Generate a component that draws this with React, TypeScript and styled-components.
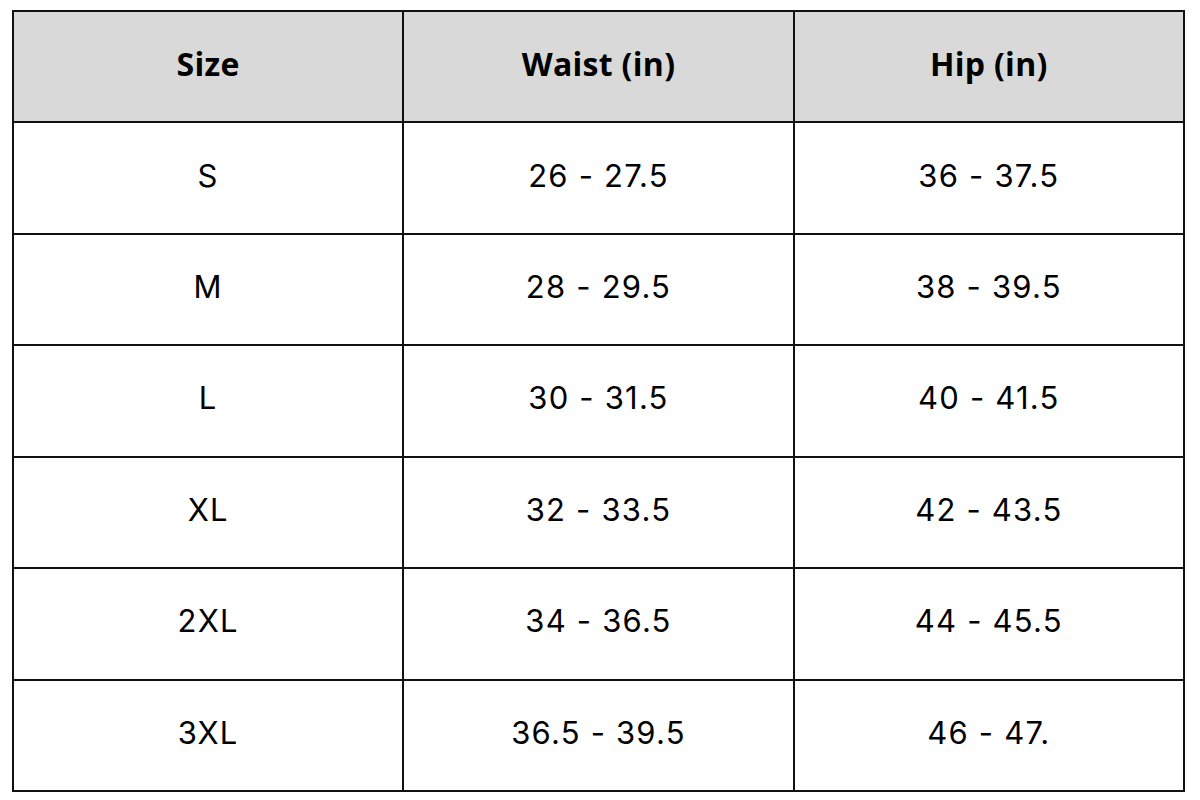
import React from "react";
import styled, { createGlobalStyle } from "styled-components";

const Global = createGlobalStyle`
  html, body { margin: 0; padding: 0; background: #ffffff; }
  body { font-family: Inter, "Open Sans", "Liberation Sans", sans-serif; }
`;

const Grid = styled.div`
  margin: 10px 0 0 12px;
  width: 1173px;
  height: 782px;
  box-sizing: border-box;
  padding: 2px;
  background: #111111;
  display: grid;
  grid-template-columns: repeat(3, 1fr);
  grid-template-rows: repeat(7, 1fr);
  gap: 2px;
`;

const Cell = styled.div<{ $head?: boolean }>`
  display: flex;
  align-items: center;
  justify-content: center;
  padding-bottom: 6px;
  box-sizing: border-box;
  background: ${(p) => (p.$head ? "#d9d9d9" : "#ffffff")};
  color: #000000;
  font-family: ${(p) =>
    p.$head
      ? `"Open Sans", Inter, "Liberation Sans", sans-serif`
      : `Inter, "Open Sans", "Liberation Sans", sans-serif`};
  font-size: ${(p) => (p.$head ? "32px" : "31px")};
  font-weight: ${(p) => (p.$head ? 700 : 400)};
  letter-spacing: ${(p) => (p.$head ? "0.3px" : "1.2px")};
`;

const head = ["Size", "Waist (in)", "Hip (in)"];
const rows = [
  ["S", "26 - 27.5", "36 - 37.5"],
  ["M", "28 - 29.5", "38 - 39.5"],
  ["L", "30 - 31.5", "40 - 41.5"],
  ["XL", "32 - 33.5", "42 - 43.5"],
  ["2XL", "34 - 36.5", "44 - 45.5"],
  ["3XL", "36.5 - 39.5", "46 - 47."],
];

export default function App() {
  return (
    <>
      <Global />
      <Grid>
        {head.map((h) => (
          <Cell key={h} $head>
            {h}
          </Cell>
        ))}
        {rows.map((r, i) =>
          r.map((c, j) => <Cell key={`${i}-${j}`}>{c}</Cell>)
        )}
      </Grid>
    </>
  );
}
